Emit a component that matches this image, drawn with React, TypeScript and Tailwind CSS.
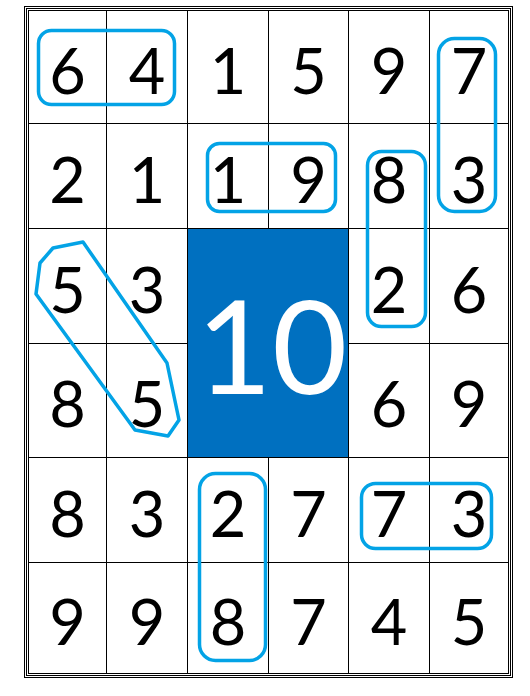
import React from "react";

const rows: (number | null)[][] = [
  [6, 4, 1, 5, 9, 7],
  [2, 1, 1, 9, 8, 3],
  [5, 3, null, null, 2, 6],
  [8, 5, null, null, 6, 9],
  [8, 3, 2, 7, 7, 3],
  [9, 9, 8, 7, 4, 5],
];

const font = { fontFamily: 'Lato, "Open Sans", sans-serif' };

export default function App() {
  const cells: React.ReactNode[] = [];
  rows.forEach((r, ri) =>
    r.forEach((v, ci) => {
      if (ri === 2 && ci === 2) {
        cells.push(
          <div
            key={`${ri}-${ci}`}
            className="col-span-2 row-span-2 bg-[#0070c0] flex items-center justify-center text-white text-[130px] leading-none pl-2 pt-[2px]"
          >
            10
          </div>
        );
        return;
      }
      if (v === null) return;
      cells.push(
        <div
          key={`${ri}-${ci}`}
          className="bg-white flex items-center justify-center text-black text-[63px] leading-none pt-[4px]"
        >
          {v}
        </div>
      );
    })
  );

  const stroke = "#03a3e6";
  return (
    <div className="relative w-[530px] h-[696px] bg-white" style={font}>
      <div className="pl-[24px] pt-[6px]">
        <div className="w-[489px] border border-black p-px">
          <div className="border border-black p-px">
            <div className="grid grid-cols-[77px_80px_80px_79px_80px_78px] grid-rows-[112px_104px_114px_113px_104px_110px] gap-px bg-black border border-black">
              {cells}
            </div>
          </div>
        </div>
      </div>
      <svg
        className="absolute left-0 top-0 pointer-events-none"
        width="530"
        height="696"
        viewBox="0 0 530 696"
        fill="none"
        stroke={stroke}
        strokeWidth="3.5"
      >
        <rect x="38.5" y="30.5" width="136" height="74" rx="13" />
        <rect x="438.5" y="38.5" width="57" height="173" rx="16" />
        <rect x="207.5" y="143.5" width="128" height="68" rx="12" />
        <rect x="367.5" y="151.5" width="58" height="175" rx="14" />
        <polygon points="53,248 83,242 167,363 179,420 168,436 135,430 36,294 40,263" strokeLinejoin="round" />
        <rect x="199.5" y="473.5" width="66" height="187" rx="16" />
        <rect x="361.5" y="483.5" width="130" height="65" rx="14" />
      </svg>
    </div>
  );
}
